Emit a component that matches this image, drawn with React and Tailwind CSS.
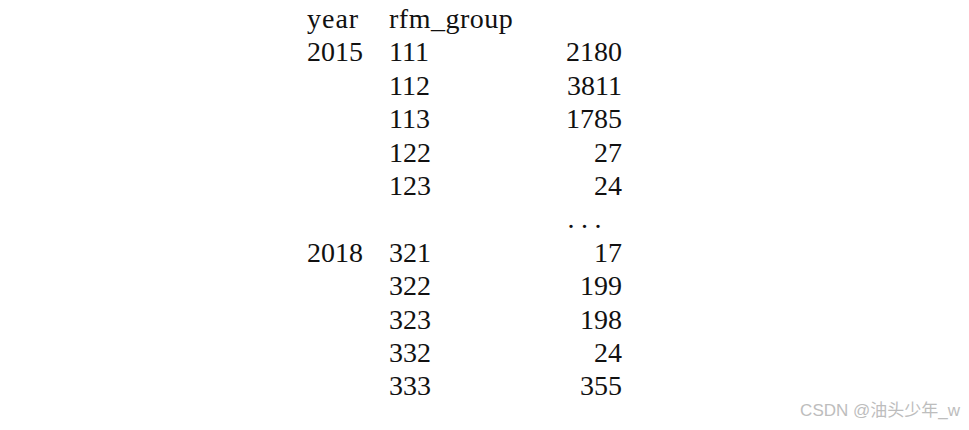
import React from 'react';

const rows = [
  { year: '2015', group: '111', count: '2180' },
  { year: '', group: '112', count: '3811' },
  { year: '', group: '113', count: '1785' },
  { year: '', group: '122', count: '27' },
  { year: '', group: '123', count: '24' },
  { ellipsis: true },
  { year: '2018', group: '321', count: '17' },
  { year: '', group: '322', count: '199' },
  { year: '', group: '323', count: '198' },
  { year: '', group: '332', count: '24' },
  { year: '', group: '333', count: '355' },
];

const App = () => {
  return (
    <div className="relative w-[969px] h-[430px] bg-white overflow-hidden">
      <div className="pt-[2px] pl-[307px] text-[28px] leading-[33.4px] text-[#111] font-['Liberation_Serif',serif]">
        <div className="flex h-[33.4px]">
          <div className="w-[82px] tracking-[1px]">year</div>
          <div className="w-[150px] tracking-[0.5px]">rfm_group</div>
        </div>
        {rows.map((row, i) =>
          row.ellipsis ? (
            <div key={i} className="flex h-[33.4px]">
              <div className="w-[82px]" />
              <div className="w-[150px]" />
              <div className="w-[83px] pr-[14px] text-right tracking-[6.5px]">...</div>
            </div>
          ) : (
            <div key={i} className="flex h-[33.4px]">
              <div className="w-[82px]">{row.year}</div>
              <div className="w-[150px]">{row.group}</div>
              <div className="w-[83px] text-right">{row.count}</div>
            </div>
          )
        )}
      </div>
      {/* watermark */}
      <div className="absolute right-[9px] top-[400px] text-[17px] leading-[22px] text-[#bdbdbd] font-['Liberation_Sans','Noto_Sans_CJK_SC',sans-serif]">
        CSDN @油头少年_w
      </div>
    </div>
  );
};

export default App;
